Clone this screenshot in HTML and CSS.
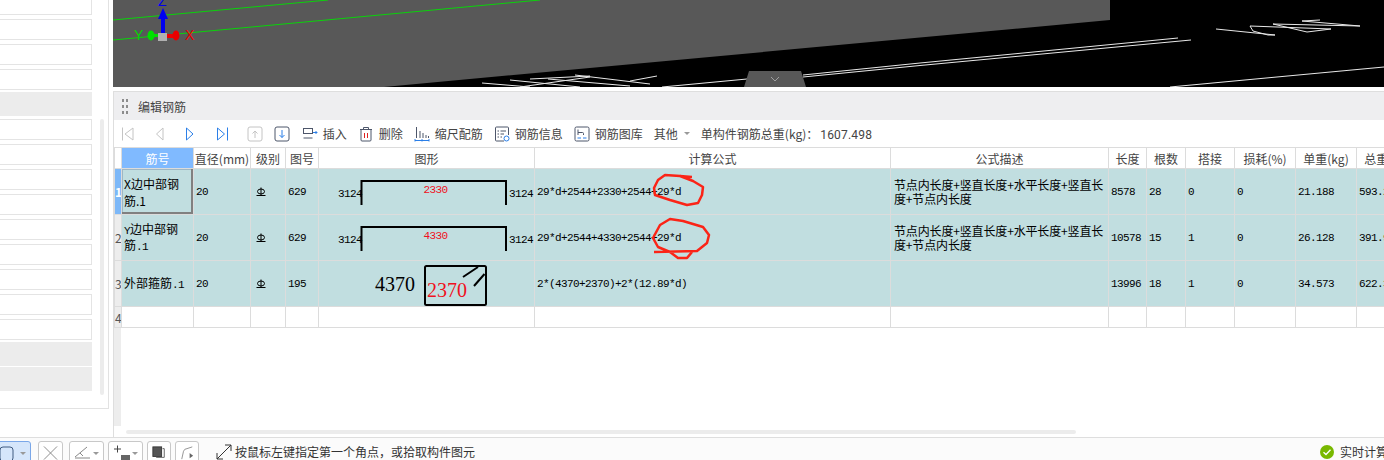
FILE: index.html
```html
<!DOCTYPE html>
<html lang="zh-CN">
<head>
  <meta charset="UTF-8">
  <title>编辑钢筋</title>
  <link rel="stylesheet" href="styles.css">
</head>
<body>
  <div class="main">
    <!-- 左侧属性列表 -->
    <aside class="side">
      <div class="side-list">
        <div class="side-item"></div>
        <div class="side-item"></div>
        <div class="side-item"></div>
        <div class="side-item"></div>
        <div class="side-item gray"></div>
        <div class="side-item"></div>
        <div class="side-item"></div>
        <div class="side-item"></div>
        <div class="side-item"></div>
        <div class="side-item"></div>
        <div class="side-item"></div>
        <div class="side-item"></div>
        <div class="side-item"></div>
        <div class="side-item"></div>
        <div class="side-item gray"></div>
        <div class="side-item gray"></div>
      </div>
      <div class="side-scroll"></div>
    </aside>

    <div class="work">
      <!-- 三维视图 -->
      <div class="view">
        <svg class="view-svg" width="1271" height="87" viewBox="113 0 1271 87">
          <polygon points="113,0 1110,0 1110,20 384,87 113,87" fill="#585858"/>
          <path d="M113 20 L328 0 M113 40 L540 0" stroke="#0bd30b" stroke-width="1" fill="none"/>
          <g fill="none" stroke="#e8e8e8" stroke-width="1">
            <path d="M482 83 L530 87 M510 80 L580 87 M548 79 L630 86 M575 75 L650 84 M630 81 L657 76 M590 77 L520 87 M530 79 L590 76"/>
            <path d="M662 87 L747 79 M803 75 L920 63 L1178 38 M803 77 L920 65.500 L1191 40 M1170 87 L1384 67"/>
            <path d="M1216 29 L1275 35 L1268 35 L1253 31 L1250 26 L1331 29 L1307 32 L1273 24 L1360 26 L1302 21 L1320 20"/>
          </g>
          <!-- 坐标轴 -->
          <rect x="161" y="17" width="4" height="17" fill="#0000f0"/>
          <polygon points="163,8 158,19 168,19" fill="#0000f0"/>
          <rect x="151" y="34" width="8" height="3" fill="#00e000"/>
          <ellipse cx="151" cy="35.500" rx="3.500" ry="5" fill="#00e000"/>
          <rect x="167" y="34" width="9" height="4" fill="#f00000"/>
          <ellipse cx="176" cy="35.500" rx="3.500" ry="5" fill="#e80000"/>
          <rect x="158" y="33" width="9" height="8" fill="#b0b0b0"/>
          <text class="axis" x="158" y="6" fill="#0000f0">Z</text>
          <text class="axis" x="134" y="40" fill="#00d800">Y</text>
          <text class="axis" x="185" y="40" fill="#f00000">X</text>
          <!-- 折叠按钮 -->
          <polygon points="749,71 801,71 806,87 744,87" fill="#585858"/>
          <path d="M771 77 L775 81 L779 77" stroke="#a0a0a0" fill="none"/>
        </svg>
      </div>

      <!-- 编辑钢筋面板 -->
      <section class="panel">
        <div class="panel-head">
          <span class="grip"><i></i><i></i><i></i><i></i><i></i><i></i></span>
          <span>编辑钢筋</span>
        </div>

        <div class="toolbar">
          <svg class="nav-ic" width="16" height="16" viewBox="0 0 16 16"><path d="M2.500 1.500V14.500M13 2 5 8l8 6Z" class="s-off"/></svg>
          <svg class="nav-ic" width="16" height="16" viewBox="0 0 16 16"><path d="M11 2 4.500 8l6.500 6Z" class="s-off"/></svg>
          <svg class="nav-ic" width="16" height="16" viewBox="0 0 16 16"><path d="M3.500 2 10 8l-6.500 6Z" class="s-blue"/></svg>
          <svg class="nav-ic" width="16" height="16" viewBox="0 0 16 16"><path d="M2.500 2 9.500 8l-7 6ZM12.500 1.500V14.500" class="s-blue"/></svg>
          <svg class="move-ic" width="16" height="16" viewBox="0 0 16 16"><rect x="1" y="1" width="14" height="14" rx="2" class="s-off"/><path d="M8 12V5M5.500 7.500 8 5l2.500 2.500" class="s-off"/></svg>
          <svg class="move-ic" width="16" height="16" viewBox="0 0 16 16"><rect x="1" y="1" width="14" height="14" rx="2" class="s-dark"/><path d="M8 4v7.500M5.500 9 8 11.500 10.500 9" class="s-blue"/></svg>

          <span class="tool">
            <svg width="16" height="16" viewBox="0 0 16 16"><rect x="1.500" y="2.500" width="9" height="5" class="s-dark"/><path d="M1.500 12H10.500" class="s-dark"/><path d="M11 6.500h4M13.500 5l1.500 1.500L13.500 8" class="s-blue"/></svg>
            插入
          </span>
          <span class="tool">
            <svg width="16" height="16" viewBox="0 0 16 16"><path d="M2 3.500H14M5.500 3.500V1.500H10.500V3.500M3 3.500V14a1 1 0 0 0 1 1H12a1 1 0 0 0 1-1V3.500" class="s-dark"/><path d="M6.500 7V12M9.500 7V12" stroke="#e02020" fill="none"/></svg>
            删除
          </span>
          <span class="tool">
            <svg width="16" height="16" viewBox="0 0 16 16"><path d="M2.500 1V12M6 5V12M9 7V12M12 9V12M14.500 10V12" class="s-dark"/><path d="M1 14.500H15M1 13V15.500M15 13V15.500M8 13V15.500" class="s-blue"/></svg>
            缩尺配筋
          </span>
          <span class="tool">
            <svg width="16" height="16" viewBox="0 0 16 16"><path d="M10 15H2.500a1 1 0 0 1-1-1V2a1 1 0 0 1 1-1H13.500a1 1 0 0 1 1 1V9" class="s-dark"/><path d="M3.500 5H5M6.500 5H12M3.500 8H5M6.500 8H10M3.500 11H5M6.500 11H8" class="s-dark"/><circle cx="12.500" cy="12.500" r="2.500" class="s-blue"/></svg>
            钢筋信息
          </span>
          <span class="tool">
            <svg width="16" height="16" viewBox="0 0 16 16"><rect x="1" y="1" width="14" height="14" rx="1.500" class="s-dark"/><path d="M4 3.500V9M4 6.500H8.500a1 1 0 0 1 1 1V9" class="s-dark"/><path d="M3.500 12H7M9 12H12.500" class="s-blue"/></svg>
            钢筋图库
          </span>
          <span class="tool">其他<i class="caret"></i></span>
          <span class="weight">单构件钢筋总重(kg)：<b>1607.498</b></span>
        </div>

        <div class="grid-wrap">
          <table class="grid">
            <colgroup>
              <col class="c-no"><col class="c-name"><col class="c-dia"><col class="c-lvl"><col class="c-pic"><col class="c-shape">
              <col class="c-calc"><col class="c-desc"><col class="c-len"><col class="c-cnt"><col class="c-lap"><col class="c-loss">
              <col class="c-unit"><col class="c-total">
            </colgroup>
            <thead>
              <tr>
                <th></th>
                <th class="active">筋号</th>
                <th>直径(mm)</th>
                <th>级别</th>
                <th>图号</th>
                <th>图形</th>
                <th>计算公式</th>
                <th>公式描述</th>
                <th>长度</th>
                <th>根数</th>
                <th>搭接</th>
                <th>损耗(%)</th>
                <th>单重(kg)</th>
                <th>总重(kg)</th>
              </tr>
            </thead>
            <tbody>
              <tr class="filled">
                <td class="row-no selected">1</td>
                <td class="name current">X边中部钢<br>筋.1</td>
                <td class="num">20</td>
                <td class="lvl"><svg width="10" height="10" viewBox="0 0 10 10"><ellipse cx="5" cy="4.500" rx="3.500" ry="2.500"/><path d="M5 .5V8.500M.5 8.500H9.500"/></svg></td>
                <td class="num">629</td>
                <td class="shape">
                  <svg width="216" height="44" viewBox="318 169 216 44">
                    <path d="M360.500 204V180H505V204" class="bar"/>
                    <text class="dim" x="337" y="196">3124</text>
                    <text class="dim" x="508" y="196">3124</text>
                    <text class="dim red" x="422.500" y="192">2330</text>
                  </svg>
                </td>
                <td class="num">29*d+2544+2330+2544+29*d</td>
                <td class="desc">节点内长度+竖直长度+水平长度+竖直长<br>度+节点内长度</td>
                <td class="num">8578</td>
                <td class="num">28</td>
                <td class="num">0</td>
                <td class="num">0</td>
                <td class="num">21.188</td>
                <td class="num">593.264</td>
              </tr>
              <tr class="filled">
                <td class="row-no">2</td>
                <td class="name"><span class="mono">Y</span>边中部钢<br>筋<span class="mono">.1</span></td>
                <td class="num">20</td>
                <td class="lvl"><svg width="10" height="10" viewBox="0 0 10 10"><ellipse cx="5" cy="4.500" rx="3.500" ry="2.500"/><path d="M5 .5V8.500M.5 8.500H9.500"/></svg></td>
                <td class="num">629</td>
                <td class="shape">
                  <svg width="216" height="44" viewBox="318 215 216 44">
                    <path d="M360.500 250V226H505V250" class="bar"/>
                    <text class="dim" x="337" y="242">3124</text>
                    <text class="dim" x="508" y="242">3124</text>
                    <text class="dim red" x="422.500" y="238">4330</text>
                  </svg>
                </td>
                <td class="num">29*d+2544+4330+2544+29*d</td>
                <td class="desc">节点内长度+竖直长度+水平长度+竖直长<br>度+节点内长度</td>
                <td class="num">10578</td>
                <td class="num">15</td>
                <td class="num">1</td>
                <td class="num">0</td>
                <td class="num">26.128</td>
                <td class="num">391.92</td>
              </tr>
              <tr class="filled">
                <td class="row-no">3</td>
                <td class="name">外部箍筋<span class="mono">.1</span></td>
                <td class="num">20</td>
                <td class="lvl"><svg width="10" height="10" viewBox="0 0 10 10"><ellipse cx="5" cy="4.500" rx="3.500" ry="2.500"/><path d="M5 .5V8.500M.5 8.500H9.500"/></svg></td>
                <td class="num">195</td>
                <td class="shape">
                  <svg width="216" height="44" viewBox="318 261 216 44">
                    <rect x="424" y="265" width="61" height="39" rx="1.500" class="bar"/>
                    <path d="M462 276 477 266M473 285 483.500 273" class="bar"/>
                    <text class="big" x="374" y="290">4370</text>
                    <text class="big red" x="426" y="296">2370</text>
                  </svg>
                </td>
                <td class="num">2*(4370+2370)+2*(12.89*d)</td>
                <td class="desc"></td>
                <td class="num">13996</td>
                <td class="num">18</td>
                <td class="num">1</td>
                <td class="num">0</td>
                <td class="num">34.573</td>
                <td class="num">622.314</td>
              </tr>
              <tr class="blank">
                <td class="row-no">4</td>
                <td></td><td></td><td></td><td></td><td></td><td></td><td></td><td></td><td></td><td></td><td></td><td></td><td></td>
              </tr>
            </tbody>
          </table>
          <div class="grid-rest"></div>
          <div class="hscroll"></div>
        </div>
      </section>
    </div>
  </div>

  <!-- 底部状态栏 -->
  <footer class="status">
    <span class="st-btn on w-30"><svg width="16" height="16" viewBox="0 0 16 16"><rect x="0" y="2" width="13" height="14" rx="3" fill="none" stroke="#3f5a80"/></svg><i class="caret"></i></span>
    <span class="st-btn w-25"><svg width="16" height="16" viewBox="0 0 16 16"><path d="M1 1 15 15M15 1 1 15" stroke="#888" fill="none"/></svg></span>
    <span class="st-btn w-35"><svg width="18" height="16" viewBox="0 0 18 16"><path d="M1 12 13 2M1 13H16" stroke="#888" fill="none"/><path d="M6 8 9 11" stroke="#888" fill="none"/></svg><i class="caret"></i></span>
    <span class="st-btn w-35"><svg width="18" height="16" viewBox="0 0 18 16"><path d="M1 4H8M4.500 .5V7.500" stroke="#444" fill="none"/><rect x="8" y="10" width="9" height="5" fill="#666"/></svg><i class="caret"></i></span>
    <span class="st-btn w-24"><svg width="16" height="16" viewBox="0 0 16 16"><rect x="1" y="1" width="10" height="11" fill="#555" stroke="#333"/><path d="M12 3H14V13H5V12" stroke="#555" fill="none"/></svg></span>
    <span class="st-btn w-24"><svg width="16" height="16" viewBox="0 0 16 16"><path d="M2 15 4 6Q5 3 8 3L14 1" stroke="#888" fill="none"/><path d="M11 8 15 11 11 14Z" fill="#666"/></svg></span>
    <svg class="hint-ic" width="16" height="16" viewBox="0 0 16 16"><path d="M1 15 15 1M9 1H15V7M1 9V15H7" stroke="#333" fill="none"/></svg>
    <span class="hint">按鼠标左键指定第一个角点，或拾取构件图元</span>
    <span class="calc">
      <svg width="14" height="14" viewBox="0 0 14 14"><circle cx="7" cy="7" r="7" fill="#78b800"/><path d="M3.500 7.200 6 9.500 10.500 4.800" stroke="#fff" stroke-width="1.300" fill="none"/></svg>
      实时计算
    </span>
  </footer>

  <!-- 截图上的红色手绘圈 -->
  <svg class="ink" width="1384" height="460" viewBox="0 0 1384 460">
    <path d="M692 177 680 176 665 175 658 180 654 188 655 195 670 200 687 205 698 203 702 195 703 187 693 181 680 176"/>
    <path d="M654 252 697 251 707 243 709 235 703 227 683 221 670 219 660 225 653 238 658 247 670 252 678 258 687 258 692 252"/>
  </svg>
</body>
</html>
```

FILE: styles.css
```css
/* 页面 */
html, body {
  margin: 0;
  height: 100%;
}

body {
  position: relative;
  width: 1384px;
  height: 460px;
  overflow: hidden;
  background: #fff;
  color: #444;
  font-family: "Noto Sans CJK SC", "Noto Sans", sans-serif;
  font-size: 12px;
}

.main {
  display: flex;
  height: 437px;
}

/* 左侧列表 */
.side {
  display: flex;
  flex: none;
  box-sizing: border-box;
  width: 109px;
  height: 409px;
  margin-right: 4px;
  border-right: 1px solid #e2e2e2;
  border-bottom: 1px solid #e2e2e2;
  overflow: hidden;
}

.side-list {
  display: flex;
  flex-direction: column;
  gap: 4px;
  width: 92px;
  margin-top: -6px;
}

.side-item {
  flex: none;
  box-sizing: border-box;
  height: 21px;
  border: 1.500px solid #e4e4e4;
  border-left: 0;
  background: #fff;
}

.side-item.gray {
  height: 24px;
  margin-top: -2px;
  margin-bottom: -1px;
  border: 0;
  background: #ececec;
}

.side-scroll {
  width: 4px;
  height: 276px;
  margin: 119px 0 0 8px;
  border-radius: 2px;
  background: #ececec;
}

/* 右侧 */
.work {
  display: flex;
  flex: 1;
  flex-direction: column;
  min-width: 0;
}

.view {
  flex: none;
  height: 87px;
  margin-bottom: 4px;
  background: #000;
}

.view-svg {
  display: block;
}

.axis {
  font-family: "Liberation Sans", sans-serif;
  font-size: 14px;
}

.panel {
  display: flex;
  flex: 1;
  flex-direction: column;
  min-height: 0;
  border-top: 1px solid #dedede;
  border-left: 1px solid #dedede;
}

.panel-head {
  display: flex;
  flex: none;
  align-items: center;
  height: 28px;
  padding-left: 8px;
  background: #eeeef0;
  color: #444;
}

.grip {
  display: grid;
  grid-template-columns: 2px 2px;
  gap: 3px 2px;
  margin-right: 10px;
  padding-top: 1px;
}

.grip i {
  width: 2px;
  height: 3px;
  background: #8c8c8c;
}

/* 工具栏 */
.toolbar {
  display: flex;
  flex: none;
  align-items: center;
  box-sizing: border-box;
  height: 27px;
  padding-left: 6px;
  color: #444;
  white-space: nowrap;
}

.toolbar svg {
  flex: none;
}

.nav-ic {
  margin-right: 15.700px;
}

.move-ic {
  margin-right: 11.500px;
}

.tool {
  display: flex;
  align-items: center;
  gap: 5px;
  margin-right: 11px;
}

.weight b {
  margin-left: 2px;
  font-family: Roboto, sans-serif;
  font-weight: 400;
  letter-spacing: .2px;
}

.caret {
  display: inline-block;
  width: 0;
  height: 0;
  margin-left: 1px;
  border-top: 3px solid #999;
  border-right: 3px solid transparent;
  border-left: 3px solid transparent;
}

.s-off, .s-dark, .s-blue {
  fill: none;
  stroke-width: 1;
}

.s-off { stroke: #c4c4c4; }
.s-dark { stroke: #4d566a; }
.s-blue { stroke: #2b7fe8; }

/* 表格 */
.grid-wrap {
  flex: 1;
  min-height: 0;
  overflow: hidden;
}

.grid {
  table-layout: fixed;
  width: 1303px;
  border-collapse: collapse;
  color: #000;
}

.c-no { width: 7px; }
.c-name { width: 72px; }
.c-dia { width: 57px; }
.c-lvl { width: 35px; }
.c-pic { width: 33px; }
.c-shape { width: 216px; }
.c-calc { width: 356px; }
.c-desc { width: 218px; }
.c-len { width: 38px; }
.c-cnt { width: 39px; }
.c-lap { width: 49px; }
.c-loss { width: 61px; }
.c-unit { width: 61px; }
.c-total { width: 61px; }

.grid th, .grid td {
  box-sizing: border-box;
  padding: 0;
  border: 1px solid #dcdcdc;
  overflow: hidden;
  white-space: nowrap;
}

.grid th {
  height: 21px;
  color: #444;
  font-weight: 400;
}

.grid th.active {
  background: #80baff;
  color: #fff;
}

.filled {
  height: 46px;
}

.filled td {
  height: 46px;
  background: #c1dee0;
}

.shape svg {
  display: block;
  overflow: visible;
}

.blank td {
  height: 21px;
}

.grid .row-no {
  background: #ededed;
  color: #555;
  font-size: 12px;
  text-align: center;
}

.grid .row-no.selected {
  background: #7db8f8;
  color: #fff;
  font-weight: 700;
}

.grid .num {
  padding-left: 2px;
  font-family: "Liberation Mono", monospace;
  font-size: 11px;
  letter-spacing: -.6px;
}

.grid .name {
  padding-left: 2px;
  line-height: 14px;
}

.mono {
  font-family: "Liberation Mono", monospace;
  font-size: 11px;
  letter-spacing: -.6px;
}

.grid .current {
  box-shadow: inset -2px -2px 0 #808080, inset 1px 1px 0 #9fb7c4;
  line-height: 17px;
}

.lvl svg {
  display: block;
  margin-left: 5px;
  fill: none;
  stroke: #000;
}

.bar {
  fill: none;
  stroke: #000;
  stroke-width: 2;
}

.dim {
  font-family: "Liberation Mono", monospace;
  font-size: 11px;
  letter-spacing: -.6px;
}

.big {
  font-family: "Liberation Serif", serif;
  font-size: 20px;
}

.red {
  fill: #f01020;
}

.grid .desc {
  padding-left: 3px;
  line-height: 14px;
  letter-spacing: -.15px;
}

.grid-rest {
  width: 7px;
  height: 98px;
  background: #ededed;
}

.hscroll {
  width: 950px;
  height: 4px;
  margin: 4px 0 0 12px;
  border-radius: 2px;
  background: #ececec;
}

/* 状态栏 */
.status {
  display: flex;
  align-items: flex-start;
  box-sizing: border-box;
  height: 23px;
  padding-top: 3px;
  border-top: 1px solid #dedede;
  background: #fbfbfb;
  color: #333;
  white-space: nowrap;
}

.st-btn {
  display: flex;
  flex: none;
  align-items: center;
  justify-content: space-between;
  box-sizing: border-box;
  height: 24px;
  margin-right: 4px;
  padding: 2px 4px;
  border: 1px solid #c8c8c8;
  border-radius: 3px;
  background: #fff;
}

.st-btn.on {
  margin-left: -5px;
  margin-right: 7px;
  border-color: #7aa7e8;
  background: #d5e6fb;
}

.w-24 { width: 24px; }
.w-25 { width: 25px; margin-right: 6px; }
.w-30 { width: 36px; }
.w-35 { width: 35px; }

.hint-ic {
  flex: none;
  margin: 3px 3px 0 13px;
}

.hint {
  line-height: 22px;
}

.calc {
  display: flex;
  flex: none;
  align-items: center;
  gap: 6px;
  width: 64px;
  margin-left: auto;
  line-height: 22px;
}

.calc svg {
  flex: none;
}

/* 手绘圈 */
.ink {
  position: absolute;
  left: 0;
  top: 0;
  fill: none;
  stroke: #fb2417;
  stroke-width: 2.500;
  stroke-linejoin: round;
  pointer-events: none;
}
```
